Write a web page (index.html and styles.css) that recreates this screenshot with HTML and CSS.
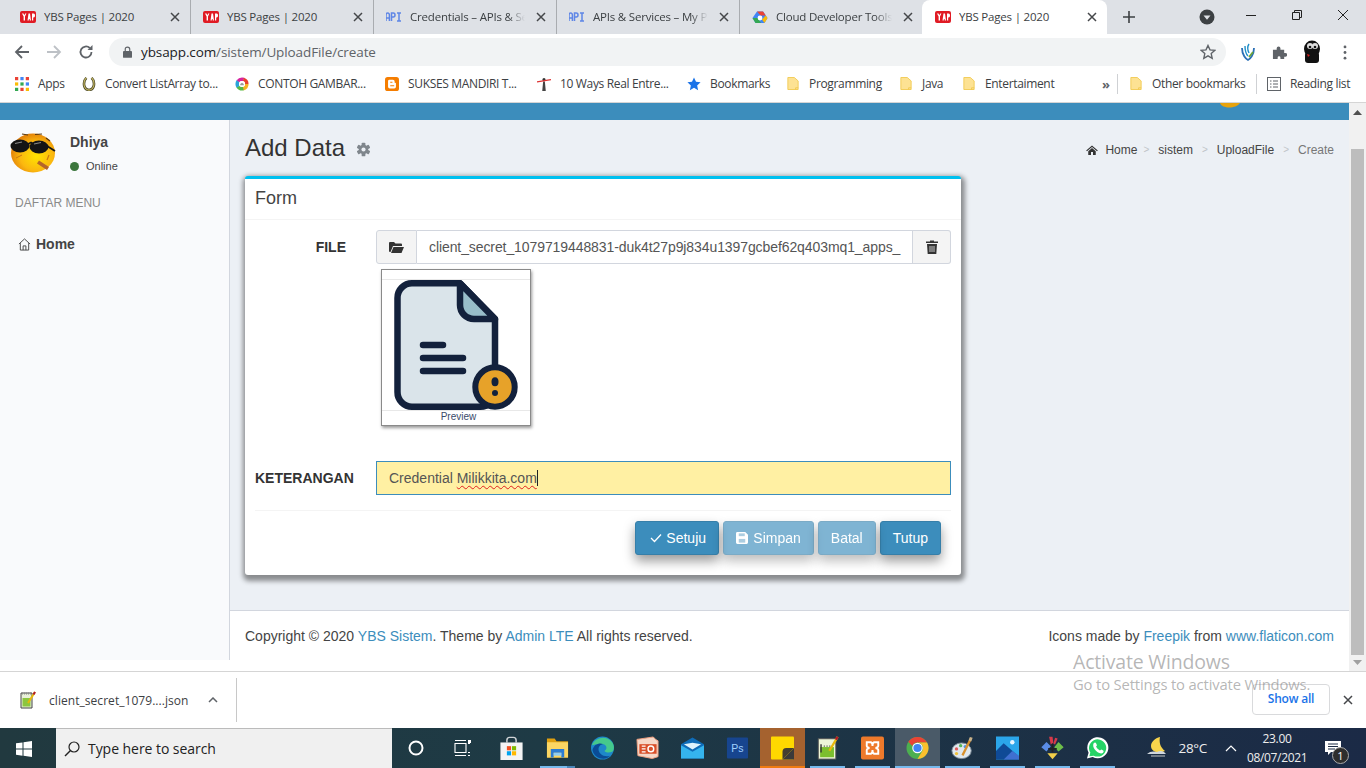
FILE: index.html
```html
<!DOCTYPE html>
<html lang="en">
<head>
<meta charset="utf-8">
<title>YBS Pages | 2020</title>
<link rel="stylesheet" href="styles.css">
</head>
<body>
<svg class="defs" width="0" height="0" aria-hidden="true">
  <symbol id="yap" viewBox="0 0 16 16"><rect x="0" y="2" width="16" height="12" rx="2" fill="#e01b24"/><path d="M2 4.500l1.600 3v4h1.400v-4l1.400-3H5.200L4.300 6.300 3.500 4.500zM7.500 11.500l1-7h1.500l1 7H9.800l-.2-1.500H8.900l-.2 1.500zM12 4.500h1.500c1.300 0 1.500 1 1.500 2s-.4 2-1.500 2h-.3v3H12z" fill="#fff"/></symbol>
  <symbol id="api" viewBox="0 0 16 16"><path d="M0 12V6c0-1 .6-2 1.700-2S3.400 5 3.400 6v6M0 9h3.400M5.500 12V4h1.800c1.100 0 1.700.8 1.700 2s-.6 2-1.700 2H5.500M11 4h4M13 4v8M11 12h4" fill="none" stroke="#5f86e6" stroke-width="1.500"/></symbol>
  <symbol id="x" viewBox="0 0 10 10"><path d="M1 1l8 8M9 1l-8 8" fill="none" stroke="#45474a" stroke-width="1.500"/></symbol>
  <symbol id="folder" viewBox="0 0 14 16"><path d="M1 1h7.500L13 5v10H1z" fill="#fde293" stroke="#f1c84b" stroke-width="1"/><path d="M10 15v-2h3" fill="none" stroke="#f1c84b"/></symbol>
</svg>

<header class="tabstrip">
  <div class="tab"><svg class="fav"><use href="#yap"/></svg><span class="tab-title">YBS Pages | 2020</span><svg class="tab-x"><use href="#x"/></svg></div>
  <div class="tab"><svg class="fav"><use href="#yap"/></svg><span class="tab-title">YBS Pages | 2020</span><svg class="tab-x"><use href="#x"/></svg></div>
  <div class="tab"><svg class="fav"><use href="#api"/></svg><span class="tab-title tab-fade">Credentials – APIs &amp; Services</span><svg class="tab-x"><use href="#x"/></svg></div>
  <div class="tab"><svg class="fav"><use href="#api"/></svg><span class="tab-title tab-fade">APIs &amp; Services – My Project</span><svg class="tab-x"><use href="#x"/></svg></div>
  <div class="tab tab-last"><svg class="fav" viewBox="0 0 16 16"><path d="M5 2.500h6l4.500 6.500-3 5H3.500l-3-5z" fill="#4285f4"/><path d="M5 2.500h6l2.800 4H8.500z" fill="#ea4335"/><path d="M.5 9l3 5h5.500l-3-5z" fill="#34a853"/><path d="M12.500 14l3-5-1.700-2.500-3.800 4z" fill="#fbbc05"/><circle cx="8" cy="9" r="2.400" fill="#fff"/></svg><span class="tab-title tab-fade">Cloud Developer Tools</span><svg class="tab-x"><use href="#x"/></svg></div>
  <div class="tab tab-active"><svg class="fav"><use href="#yap"/></svg><span class="tab-title">YBS Pages | 2020</span><svg class="tab-x"><use href="#x"/></svg></div>
  <svg class="newtab" viewBox="0 0 12 12"><path d="M6 0v12M0 6h12" stroke="#3c4043" stroke-width="1.600"/></svg>
  <div class="tabstrip-right">
    <svg class="tabsearch" viewBox="0 0 16 16"><circle cx="8" cy="8" r="7.500" fill="#3c4043"/><path d="M4.500 6.500h7L8 10.800z" fill="#dee1e6"/></svg>
    <div class="winctl">
      <svg viewBox="0 0 10 10"><path d="M0 5.500h10" stroke="#222"/></svg>
      <svg viewBox="0 0 10 10"><path d="M.5 2.500h7v7h-7zM2.500 2.500v-2h7v7h-2" fill="none" stroke="#222"/></svg>
      <svg viewBox="0 0 10 10"><path d="M0 0l10 10M10 0L0 10" stroke="#222"/></svg>
    </div>
  </div>
</header>

<nav class="toolbar">
  <svg class="nav-btn" viewBox="0 0 16 16"><path d="M15 8H2M8 2L2 8l6 6" fill="none" stroke="#5f6368" stroke-width="1.800"/></svg>
  <svg class="nav-btn" viewBox="0 0 16 16"><path d="M1 8h13M8 2l6 6-6 6" fill="none" stroke="#bdc1c6" stroke-width="1.800"/></svg>
  <svg class="nav-btn" viewBox="0 0 16 16"><path d="M13.500 8a5.500 5.500 0 1 1-1.700-4" fill="none" stroke="#5f6368" stroke-width="1.800"/><path d="M14.500 1v5h-5z" fill="#5f6368"/></svg>
  <div class="omnibox">
    <svg class="lock" viewBox="0 0 10 13"><path d="M2.500 6V3.500a2.500 2.500 0 0 1 5 0V6" fill="none" stroke="#5f6368" stroke-width="1.300"/><rect y="5.500" width="10" height="7.500" rx="1" fill="#5f6368"/></svg>
    <span class="url"><span class="url-host">ybsapp.com</span>/sistem/UploadFile/create</span>
    <svg class="star" viewBox="0 0 16 16"><path d="M8 1.500l2 4.400 4.700.5-3.500 3.200 1 4.700L8 11.900l-4.200 2.400 1-4.700L1.300 6.400 6 5.900z" fill="none" stroke="#5f6368" stroke-width="1.400"/></svg>
  </div>
  <svg class="ext-y" viewBox="0 0 16 18"><path d="M2 5c0 7 4 11 6 12 2-1 6-5 6-12" fill="none" stroke="#2a6fb5" stroke-width="1.800"/><path d="M5 3c0 6 2 9 3 10M9 1C7 4 8 8 9 10" fill="none" stroke="#1f8fc9" stroke-width="1.400"/><path d="M9 14l4-5" stroke="#6ba539" stroke-width="1.800"/></svg>
  <svg class="ext-p" viewBox="0 0 16 16"><path d="M1 5h4V3.500a2 2 0 0 1 4 0V5h4v3.500h1.200a2 2 0 0 1 0 4H13V15H9v-1.500a1.500 1.500 0 0 0-3 0V15H1z" fill="#5f6368"/></svg>
  <svg class="avatar" viewBox="0 0 20 24"><ellipse cx="10" cy="9" rx="8" ry="8.500" fill="#111"/><rect x="3" y="12" width="14" height="11" rx="3" fill="#111"/><circle cx="8" cy="6" r="3" fill="#ddd"/><circle cx="13" cy="6" r="3" fill="#ddd"/><circle cx="8" cy="7" r="1.300" fill="#111"/><circle cx="13" cy="7" r="1.300" fill="#111"/><path d="M5 14l3 1-2 2z" fill="#d42020"/></svg>
  <svg class="kebab" viewBox="0 0 4 16"><circle cx="2" cy="2" r="1.500" fill="#5f6368"/><circle cx="2" cy="8" r="1.500" fill="#5f6368"/><circle cx="2" cy="14" r="1.500" fill="#5f6368"/></svg>
</nav>

<nav class="bookmarks">
  <div class="bm"><svg class="bm-i" viewBox="0 0 13 13"><g><rect width="3" height="3" fill="#ea4335"/><rect x="5" width="3" height="3" fill="#4285f4"/><rect x="10" width="3" height="3" fill="#ea4335"/><rect y="5" width="3" height="3" fill="#fbbc05"/><rect x="5" y="5" width="3" height="3" fill="#34a853"/><rect x="10" y="5" width="3" height="3" fill="#4285f4"/><rect y="10" width="3" height="3" fill="#34a853"/><rect x="5" y="10" width="3" height="3" fill="#ea4335"/><rect x="10" y="10" width="3" height="3" fill="#fbbc05"/></g></svg><span>Apps</span></div>
  <div class="bm"><svg class="bm-i" viewBox="0 0 14 16"><path d="M4 1C0 5 0 14 7 15 14 14 14 5 10 1" fill="none" stroke="#4d4a2c" stroke-width="3"/><path d="M4 1C0 5 0 14 7 15 14 14 14 5 10 1" fill="none" stroke="#c9bc62" stroke-width="1.200"/></svg><span>Convert ListArray to...</span></div>
  <div class="bm"><svg class="bm-i" viewBox="0 0 16 16"><g fill="none" stroke-width="4"><circle cx="8" cy="8" r="5.500" stroke="#f5b324" pathLength="100" stroke-dasharray="21 79"/><circle cx="8" cy="8" r="5.500" stroke="#58b947" pathLength="100" stroke-dasharray="21 79" stroke-dashoffset="-20"/><circle cx="8" cy="8" r="5.500" stroke="#2ba4d9" pathLength="100" stroke-dasharray="21 79" stroke-dashoffset="-40"/><circle cx="8" cy="8" r="5.500" stroke="#d6249f" pathLength="100" stroke-dasharray="21 79" stroke-dashoffset="-60"/><circle cx="8" cy="8" r="5.500" stroke="#e8402c" pathLength="100" stroke-dasharray="20 80" stroke-dashoffset="-80"/></g><circle cx="8" cy="8" r="3.500" fill="#fff"/><path d="M6 9.500V8l2-1.500L10 8v1.500z" fill="#999"/></svg><span>CONTOH GAMBAR...</span></div>
  <div class="bm"><svg class="bm-i" viewBox="0 0 16 16"><rect width="16" height="16" rx="3" fill="#f57d00"/><path d="M5 3h4a2 2 0 0 1 2 2v1.500h.5a1 1 0 0 1 1 1V11a2 2 0 0 1-2 2H5.500a2 2 0 0 1-2-2V4.500A1.500 1.500 0 0 1 5 3z" fill="#fff"/><path d="M6 6h2.500M6 10h4.500" stroke="#f57d00" stroke-width="1.300"/></svg><span>SUKSES MANDIRI T...</span></div>
  <div class="bm"><svg class="bm-i" viewBox="0 0 16 16"><path d="M7 5h2l1 11H6z" fill="#444"/><circle cx="8" cy="3" r="1.800" fill="#333"/><path d="M0 5.500L16 3" stroke="#d33" stroke-width="1.500"/></svg><span>10 Ways Real Entre...</span></div>
  <div class="bm"><svg class="bm-i" viewBox="0 0 16 16"><path d="M8 .5l2.300 5 5.200.6-3.900 3.500 1.100 5.400L8 12.300 3.300 15l1.100-5.400L.5 6.100l5.200-.6z" fill="#1a73e8"/></svg><span>Bookmarks</span></div>
  <div class="bm"><svg class="bm-f"><use href="#folder"/></svg><span>Programming</span></div>
  <div class="bm"><svg class="bm-f"><use href="#folder"/></svg><span>Java</span></div>
  <div class="bm"><svg class="bm-f"><use href="#folder"/></svg><span>Entertaiment</span></div>
  <div class="bm bm-more">»</div>
  <div class="bm-sep"></div>
  <div class="bm"><svg class="bm-f"><use href="#folder"/></svg><span>Other bookmarks</span></div>
  <div class="bm-sep"></div>
  <div class="bm"><svg class="bm-i" viewBox="0 0 14 14"><rect x=".5" y=".5" width="13" height="13" fill="none" stroke="#5f6368"/><path d="M3 4h1.500M6 4h5M3 7h1.500M6 7h5M3 10h1.500M6 10h5" stroke="#5f6368"/></svg><span>Reading list</span></div>
</nav>

<main class="page">
  <div class="viewport">
    <div class="topbar"><svg class="topbar-peek" viewBox="0 0 20 6"><path d="M0 0c2 6 16 6 20 0z" fill="#e8a30c"/></svg></div>
    <div class="app">
      <aside class="sidebar">
        <div class="user">
          <svg class="user-pic" viewBox="0 0 46 42">
            <defs><radialGradient id="face" cx=".58" cy=".58" r=".62"><stop offset="0" stop-color="#ffe400"/><stop offset=".6" stop-color="#fbb80f"/><stop offset="1" stop-color="#e07a08"/></radialGradient></defs>
            <ellipse cx="23" cy="21" rx="22" ry="19.500" fill="url(#face)"/>
            <path d="M12 2l6 1M25 2.500l7-.5M36 6l4 3" fill="none" stroke="#5a3a10" stroke-width="1.200"/>
            <ellipse cx="10" cy="14" rx="9.500" ry="6.500" fill="#151515"/>
            <ellipse cx="29" cy="15" rx="9.500" ry="6.500" fill="#151515"/>
            <path d="M18 12l3-1.500 2 1.500M37 14l8 5" fill="none" stroke="#151515" stroke-width="1.800"/>
            <path d="M5 11.500l7-1.500M24 12l7-1.500" stroke="#8a8a8a" stroke-width="1.200"/>
            <path d="M6 26l6-3" stroke="#c97a10" stroke-width="1"/>
            <path d="M27 31.500l10 6.500 2-3-10-6.500z" fill="#b5652a"/>
            <path d="M37 28l2-5" stroke="#c97a10" stroke-width="1.200"/>
          </svg>
          <div class="user-info">
            <div class="user-name">Dhiya</div>
            <div class="user-status"><span class="dot"></span>Online</div>
          </div>
        </div>
        <div class="menu-head">DAFTAR MENU</div>
        <div class="menu-item">
          <svg class="home-i" viewBox="0 0 14 14"><path d="M1 6.500L7 1l6 5.500M2.500 5.500V13h9V5.500M5.500 13V8.500h3V13" fill="none" stroke="#444" stroke-width="1"/></svg>
          <span>Home</span>
        </div>
      </aside>
      <div class="main">
        <section class="content">
          <div class="content-head">
            <h1>Add Data</h1>
            <svg class="gear" viewBox="0 0 16 16"><g fill="#7f868c"><circle cx="8" cy="8" r="5"/><rect x="6" y=".7" width="4" height="14.600" rx="1"/><rect x="6" y=".7" width="4" height="14.600" rx="1" transform="rotate(60 8 8)"/><rect x="6" y=".7" width="4" height="14.600" rx="1" transform="rotate(120 8 8)"/></g><circle cx="8" cy="8" r="2.200" fill="#ecf0f5"/></svg>
            <ol class="crumbs">
              <li class="crumb"><svg class="crumb-home" viewBox="0 0 14 12"><path d="M0 6.500L7 .5l7 6-1 1-6-5-6 5zM2.500 7.500L7 3.700l4.500 3.800V12H8.200V8.500H5.800V12H2.500z" fill="#333"/></svg>Home</li>
              <li class="crumb-sep">&gt;</li>
              <li class="crumb">sistem</li>
              <li class="crumb-sep">&gt;</li>
              <li class="crumb">UploadFile</li>
              <li class="crumb-sep">&gt;</li>
              <li class="crumb crumb-now">Create</li>
            </ol>
          </div>
          <div class="card">
            <div class="card-head">Form</div>
            <div class="card-body">
              <div class="field">
                <label class="label label-file">FILE</label>
                <div class="field-col">
                  <div class="group">
                    <span class="addon addon-l"><svg class="addon-i" viewBox="0 0 15 12"><path d="M0 2a1 1 0 0 1 1-1h4l1.500 1.500H12a1 1 0 0 1 1 1V5H4L1.500 11H1a1 1 0 0 1-1-1z" fill="#333"/><path d="M4.500 6H15l-2.500 6H2z" fill="#333"/></svg></span>
                    <span class="file-name">client_secret_1079719448831-duk4t27p9j834u1397gcbef62q403mq1_apps_</span>
                    <span class="addon addon-r"><svg class="trash" viewBox="0 0 12 14"><path d="M4 1.500V.5h4v1h4V3H0V1.500zM1 4h10l-.7 10H1.700z" fill="#333"/><path d="M4 6v6M6 6v6M8 6v6" stroke="#eee" stroke-width=".8"/></svg></span>
                  </div>
                  <div class="preview">
                    <div class="preview-img">
                      <svg class="doc" viewBox="0 4 130 130">
                        <path d="M7.500 22A14.500 14.500 0 0 1 22 7.300h48L105 43v73a14.700 14.700 0 0 1-14.700 14.700H22A14.500 14.500 0 0 1 7.500 116z" fill="#dae4ea" stroke="#13213c" stroke-width="6.500" stroke-linejoin="round"/>
                        <path d="M70 7.300V29a14 14 0 0 0 14 14h21z" fill="#98bdc9" stroke="#13213c" stroke-width="6.500" stroke-linejoin="round"/>
                        <path d="M33 69h20M33 82h40M33 95h40" stroke="#13213c" stroke-width="6.500" stroke-linecap="round"/>
                        <circle cx="105" cy="111" r="19.700" fill="#e7a229" stroke="#13213c" stroke-width="6"/>
                        <ellipse cx="105" cy="105.700" rx="3.500" ry="4.500" fill="#13213c"/>
                        <circle cx="105" cy="117" r="3" fill="#13213c"/>
                      </svg>
                    </div>
                    <div class="preview-cap">Preview</div>
                  </div>
                </div>
              </div>
              <div class="field field-note">
                <label class="label">KETERANGAN</label>
                <div class="note-input">Credential <span class="misspelt">Milikkita.com</span><span class="caret"></span></div>
              </div>
            </div>
            <div class="card-foot">
              <button class="btn btn-ok"><svg class="btn-i" viewBox="0 0 12 10"><path d="M1 5l3.500 3.500L11 1.500" fill="none" stroke="#fff" stroke-width="1.300"/></svg>Setuju</button>
              <button class="btn btn-off"><svg class="btn-i" viewBox="0 0 13 13"><path d="M0 1.500A1.500 1.500 0 0 1 1.500 0H10l3 3v8.500a1.500 1.500 0 0 1-1.500 1.500h-10A1.500 1.500 0 0 1 0 11.500z" fill="#fff"/><rect x="3" y="1.500" width="6.500" height="3" fill="#80b3d1"/><rect x="3" y="7.500" width="7" height="4" fill="#80b3d1"/></svg>Simpan</button>
              <button class="btn btn-off">Batal</button>
              <button class="btn">Tutup</button>
            </div>
          </div>
        </section>
        <footer class="footer">
          <span>Copyright © 2020 <a class="lnk">YBS Sistem</a>. Theme by <a class="lnk">Admin LTE</a> All rights reserved.</span>
          <span>Icons made by <a class="lnk">Freepik</a> from <a class="lnk">www.flaticon.com</a></span>
        </footer>
      </div>
    </div>
    <div class="strip"></div>
  </div>
  <div class="scrollbar">
    <svg class="sb-arrow" viewBox="0 0 9 5"><path d="M4.500 0L9 5H0z" fill="#505050"/></svg>
    <div class="sb-thumb"></div>
    <svg class="sb-arrow" viewBox="0 0 9 5"><path d="M4.500 5L9 0H0z" fill="#a0a0a0"/></svg>
  </div>
</main>

<section class="downloads">
  <div class="dl-item">
    <svg class="dl-i" viewBox="0 0 16 18"><path d="M1 2h11v15H1z" fill="#e8f0d8" stroke="#444"/><rect x="2.500" y="7" width="8" height="8.500" fill="#8cc63f"/><path d="M2 2.500h9" stroke="#888" stroke-dasharray="1 1" stroke-width="2"/><path d="M15 1L8 12" stroke="#e8b90c" stroke-width="2"/><path d="M15 1l-1.500 2.500" stroke="#b2182b" stroke-width="2"/></svg>
    <span class="dl-name">client_secret_1079....json</span>
    <svg class="dl-caret" viewBox="0 0 10 6"><path d="M1 5l4-4 4 4" fill="none" stroke="#5f6368" stroke-width="1.500"/></svg>
  </div>
  <div class="dl-right">
    <div class="showall">Show all</div>
    <svg class="dl-x"><use href="#x"/></svg>
  </div>
</section>

<footer class="taskbar">
  <svg class="win" viewBox="0 0 16 16"><path d="M0 2.300l6.500-.9v6.200H0zM7.500 1.300L16 0v7.600H7.500zM0 8.500h6.500v6.200L0 13.800zM7.500 8.500H16V16l-8.500-1.200z" fill="#fff"/></svg>
  <div class="search">
    <svg class="search-i" viewBox="0 0 16 16"><circle cx="10" cy="6" r="5" fill="none" stroke="#222" stroke-width="1.200"/><path d="M6.500 9.500L1 15" stroke="#222" stroke-width="1.400"/></svg>
    <span>Type here to search</span>
  </div>
  <div class="apps">
    <div class="app-slot"><svg class="ti" viewBox="0 0 18 18"><circle cx="9" cy="9" r="6.500" fill="none" stroke="#fff" stroke-width="2"/></svg></div>
    <div class="app-slot slot-tv"><svg class="ti" viewBox="0 0 18 18"><path d="M1 1.500h11M1 4.500h11v9H1zM1 16.500h11M14 4.500h2M14 13.500h2M14 16.500h2" fill="none" stroke="#fff" stroke-width="1.100"/><rect x="14" y="1" width="3" height="3" fill="#fff"/></svg></div>
    <div class="app-slot slot-store"><svg class="ti-l" viewBox="0 0 24 26"><path d="M7 7V4.500a3 3 0 0 1 3-3h4a3 3 0 0 1 3 3V7" fill="none" stroke="#cfd3d6" stroke-width="1.600"/><rect y="7" width="24" height="19" fill="#f4f4f4"/><rect x="7" y="11" width="4.500" height="4.500" fill="#f25022"/><rect x="12.500" y="11" width="4.500" height="4.500" fill="#7fba00"/><rect x="7" y="16.500" width="4.500" height="4.500" fill="#00a4ef"/><rect x="12.500" y="16.500" width="4.500" height="4.500" fill="#ffb900"/></svg></div>
    <div class="app-slot slot-open slot-explorer"><svg class="ti-l" viewBox="0 0 24 24"><path d="M1 2h8l2 3h12v17H1z" fill="#e0a010"/><rect x="1" y="6" width="22" height="16" fill="#fcd663"/><path d="M5 22v-9h14v9h-3v-5H8v5z" fill="#2b7cd3"/><rect x="8" y="17" width="8" height="3" fill="#8fcdf5"/></svg></div>
    <div class="app-slot"><svg class="ti-l" viewBox="0 0 24 24"><circle cx="12" cy="12" r="12" fill="#1e88c9"/><path d="M1 9C4 1 16-2 22 6c3 4 2 9 0 10-3 1-6 1-8-1 3-1 3-6-1-7C7 7 3 9 1 9z" fill="#45c98c"/><path d="M1.500 14C3 8 9 6 13 8c-5 0-7 6-3 10 3 3 7 3 10 2-5 6-17 3-18.500-6z" fill="#0a4c96"/></svg></div>
    <div class="app-slot"><svg class="ti-l" viewBox="0 0 24 24"><path d="M1 3l17-2.500 3 3 2 1V21l-6 2L2 20z" fill="#f6d8c8" stroke="#f0a080"/><rect x="3.500" y="8" width="18" height="10" fill="#d9502a"/><path d="M6 10h4M6 13h4M6 16h4" stroke="#fff" stroke-width="1.300"/><circle cx="15.500" cy="13" r="3" fill="none" stroke="#fff" stroke-width="1.500"/></svg></div>
    <div class="app-slot"><svg class="ti-l" viewBox="0 0 24 24"><path d="M0 8l12-7 12 7v15H0z" fill="#0f6cb8"/><path d="M0 9l12 7 12-7v14H0z" fill="#35b4ee"/><path d="M3 8l9-1.500L21 8l-9 5.500z" fill="#dff3fd"/></svg></div>
    <div class="app-slot"><svg class="ti-l" viewBox="0 0 24 24"><rect x="1" y="1" width="22" height="22" rx="1" fill="#17458f"/><text x="12" y="16.500" class="ps-t">Ps</text></svg></div>
    <div class="app-slot slot-sticky"><svg class="ti-l" viewBox="0 0 24 24"><rect width="24" height="24" rx="1" fill="#ffd800"/><path d="M24 12v12H12z" fill="#3a3a3a"/><path d="M24 12L12 24v-8a4 4 0 0 1 4-4z" fill="#443f30"/></svg></div>
    <div class="app-slot slot-open"><svg class="ti-l" viewBox="0 0 24 26"><rect x="2" y="3" width="19" height="22" fill="#eef6d8" stroke="#555"/><rect x="4" y="12" width="15" height="11" fill="#7cbf2e"/><path d="M5 9v9M8 11h1M11 11h1M14 11h1" stroke="#333" stroke-width="1.500" fill="none"/><path d="M23 1l-9 15" stroke="#e8b90c" stroke-width="2.500"/><path d="M23 1l-2 3" stroke="#b2182b" stroke-width="2.500"/></svg></div>
    <div class="app-slot slot-open"><svg class="ti-l" viewBox="0 0 24 24"><rect width="24" height="24" rx="2" fill="#ee7a2b"/><path d="M6 6h4c2 0 2 3 2 4 0-1 0-4 2-4h4v4c0 1-2 2-3 2 1 0 3 1 3 2v4h-4c-2 0-2-3-2-4 0 1 0 4-2 4H6v-4c0-1 2-2 3-2-1 0-3-1-3-2z" fill="none" stroke="#fff" stroke-width="2"/></svg></div>
    <div class="app-slot slot-active"><svg class="ti-l" viewBox="0 0 24 24"><circle cx="12" cy="12" r="11.500" fill="#4caf50"/><path d="M12 .5A11.500 11.500 0 0 1 22 6.300H12A5.800 5.800 0 0 0 6.500 10L2.400 5.500A11.500 11.500 0 0 1 12 .5z" fill="#ea4335"/><path d="M22 6.300A11.500 11.500 0 0 1 12 23.500l5-8.500A5.800 5.800 0 0 0 12 6.300z" fill="#fbc02d"/><circle cx="12" cy="12" r="5.500" fill="#fff"/><circle cx="12" cy="12" r="4.300" fill="#4285f4"/></svg></div>
    <div class="app-slot slot-open"><svg class="ti-l" viewBox="0 0 24 26"><ellipse cx="11" cy="16" rx="10.500" ry="8.500" fill="#dfe8ef" stroke="#7c8a96"/><circle cx="5.500" cy="14" r="1.800" fill="#e15b5b"/><circle cx="10" cy="10.500" r="1.800" fill="#56b556"/><circle cx="15" cy="11.500" r="1.800" fill="#4f8fe0"/><circle cx="5.500" cy="19" r="1.800" fill="#f0c23c"/><path d="M21 3L12 21" stroke="#d8902c" stroke-width="2.500"/><path d="M20 1l3 1-1.500 4-3-1z" fill="#c9b28a"/></svg></div>
    <div class="app-slot slot-open"><svg class="ti-l" viewBox="0 0 24 24"><rect width="24" height="24" fill="#2ba6ea"/><path d="M0 24V15l8-8 16 14v3z" fill="#0f4a96"/><path d="M8 24l9-9 7 5v4z" fill="#3f6fd0"/><circle cx="17" cy="6" r="2.300" fill="#e8f6ff"/></svg></div>
    <div class="app-slot slot-open"><svg class="ti-l" viewBox="0 0 26 28"><path d="M0 13l6-6 5 5-5 6z" fill="#5a8de6"/><path d="M20 7l6 6-6 5-5-5z" fill="#6ebe4a"/><path d="M7 20h12l-6 7z" fill="#f2cf4a"/><path d="M9 1l4 0 1 7-3 2z" fill="#d83a4a"/><path d="M16 2l3 1-3 7-2-1z" fill="#d83a4a"/><path d="M13 9v10M8 15h10" stroke="#222" stroke-width="2"/></svg></div>
    <div class="app-slot slot-open"><svg class="ti-l" viewBox="0 0 24 24"><path d="M1 23l1.700-6A11 11 0 1 1 7 21.300z" fill="#fff"/><path d="M3.500 20.500l1-3.700A9 9 0 1 1 8 20z" fill="#25d366"/><path d="M8 7c1-1 2-1 2.500 0l1 2-1 1.500c1 2 2 3 4 4l1.500-1 2 1c1 1 0 2.500-1 3-3 1-10-4-9.500-9z" fill="#fff"/></svg></div>
  </div>
  <div class="tray">
    <svg class="moon" viewBox="0 0 26 24"><path d="M15 1c-1 5 0 10 5 14-6 3-14 1-14-5 0-4 4-8 9-9z" fill="#f8d44c"/><path d="M2 18c3-3 7-3 10-2 3-2 7-1 9 2z" fill="#cfd6dd"/><path d="M6 20h14" stroke="#8b949c" stroke-width="1.500"/></svg>
    <span class="temp">28°C</span>
    <svg class="tray-up" viewBox="0 0 12 7"><path d="M1 6l5-5 5 5" fill="none" stroke="#fff" stroke-width="1.200"/></svg>
    <div class="clock"><div>23.00</div><div>08/07/2021</div></div>
    <div class="notif">
      <svg class="notif-i" viewBox="0 0 16 15"><path d="M0 0h16v11H6l-3 3v-3H0z" fill="#fff"/><path d="M3 3h10M3 5.500h10M3 8h7" stroke="#1b2a44" stroke-width="1"/></svg>
      <span class="badge">1</span>
    </div>
  </div>
</footer>

<div class="activate">
  <div class="activate-t">Activate Windows</div>
  <div class="activate-s">Go to Settings to activate Windows.</div>
</div>
</body>
</html>
```

FILE: styles.css
```css
* { box-sizing: border-box; }
html, body { margin: 0; padding: 0; height: 768px; overflow: hidden; background: #fff; }
body { position: relative; font-family: "Liberation Sans", Arial, sans-serif; color: #333; font-size: 14px; display: flex; flex-direction: column; }
.defs { position: absolute; }
svg { display: block; flex: none; }

/* Chrome tab strip */
.tabstrip { height: 34px; background: #dee1e6; display: flex; align-items: center; padding-left: 8px; font-family: "Open Sans", sans-serif; font-size: 11.5px; color: #3c4043; letter-spacing: -.2px; flex: none; }
.tab { width: 183px; height: 34px; display: flex; align-items: center; padding: 0 7px 0 12px; gap: 8px; border-right: 1px solid #a9acb0; background-clip: padding-box; }
.tab-last { border-right: 0; }
.tab-active { background: #fff; border: 0; border-radius: 8px 8px 0 0; margin-left: -1px; width: 185px; padding-left: 13px; }
.fav { width: 16px; height: 16px; }
.tab-title { flex: 1; white-space: nowrap; overflow: hidden; padding-bottom: 1px; }
.tab-fade { -webkit-mask-image: linear-gradient(90deg, #000 85%, transparent 100%); mask-image: linear-gradient(90deg, #000 85%, transparent 100%); }
.tab-x { width: 10px; height: 10px; margin: 0 3px; }
.newtab { width: 12px; height: 12px; margin-left: 16px; }
.tabstrip-right { margin-left: auto; display: flex; align-items: flex-start; height: 34px; }
.tabsearch { width: 16px; height: 16px; margin: 9px 31px 0 0; }
.winctl { display: flex; gap: 36px; padding: 10px 18px 0 0; }
.winctl svg { width: 10px; height: 10px; }

/* Toolbar */
.toolbar { height: 33px; background: #fff; display: flex; align-items: center; padding: 3px 0 0 14px; flex: none; }
.nav-btn { width: 16px; height: 16px; margin-right: 16px; }
.omnibox { width: 1117px; height: 28px; margin-left: -1px; border-radius: 14px; background: #f1f3f4; display: flex; align-items: center; padding: 0 10px 0 14px; font-family: "Open Sans", sans-serif; font-size: 13.5px; color: #5f6368; letter-spacing: -.1px; }
.lock { width: 9px; height: 12px; margin-right: 9px; }
.url { flex: 1; }
.url-host { color: #202124; }
.star { width: 16px; height: 16px; }
.ext-y { width: 16px; height: 18px; margin-left: 14px; }
.ext-p { width: 15px; height: 15px; margin-left: 16px; }
.avatar { width: 20px; height: 24px; margin-left: 15px; }
.kebab { width: 4px; height: 15px; margin-left: 21px; }

/* Bookmarks bar */
.bookmarks { height: 36px; background: #fff; border-bottom: 1px solid #d5d5d5; display: grid; grid-template-columns: 67px 153px 150px 152px 150px 100px 113px 63px 139px 15px 13px 126px 11px 1fr; padding: 0 0 2px 15px; align-items: center; font-family: "Open Sans", sans-serif; font-size: 12px; letter-spacing: -.34px; color: #3c4043; flex: none; white-space: nowrap; }
.bm { display: flex; align-items: center; gap: 9px; }
.bm-i { width: 14px; height: 14px; }
.bm-f { width: 12px; height: 15px; margin-right: 1px; }
.bm-more { font-size: 13px; font-weight: 700; color: #5f6368; }
.bm-sep { width: 1px; height: 20px; background: #cfd1d4; }

/* Page */
.page { height: 568px; display: flex; flex: none; background: #fff; }
.viewport { flex: 1; display: flex; flex-direction: column; min-width: 0; }
.topbar { height: 17px; background: #3c8dbc; flex: none; position: relative; }
.topbar-peek { position: absolute; left: 1220px; top: 0; width: 20px; height: 6px; }
.app { display: grid; grid-template-columns: 230px 1fr; height: 540px; flex: none; }
.strip { flex: 1; background: #fff; }

.sidebar { background: #f9fafc; border-right: 1px solid #d2d6de; padding: 12px 0 0 10px; }
.user { display: flex; gap: 14px; }
.user-pic { width: 46px; height: 42px; }
.user-info { padding-top: 2px; }
.user-name { font-weight: 700; font-size: 14px; line-height: 16px; color: #444; }
.user-status { display: flex; align-items: center; gap: 7px; font-size: 11px; margin-top: 9px; line-height: 14px; color: #444; }
.dot { width: 9px; height: 9px; border-radius: 50%; background: #3c763d; }
.menu-head { margin: 21px 0 0 5px; font-size: 12px; line-height: 16px; color: #8a8a8a; }
.menu-item { margin: 24px 0 0 8px; display: flex; align-items: center; gap: 5px; font-weight: 700; font-size: 14px; line-height: 18px; color: #444; }
.home-i { width: 13px; height: 13px; }

.main { display: flex; flex-direction: column; background: #ecf0f5; min-width: 0; }
.content { flex: 1; padding: 0 15px; }
.content-head { height: 56px; display: flex; align-items: center; }
h1 { margin: 0; font-size: 24px; font-weight: 400; color: #333; line-height: 56px; }
.gear { width: 15px; height: 15px; margin: 3px 0 0 11px; }
.crumbs { list-style: none; margin: 3px 0 0 auto; padding: 0; display: flex; align-items: center; font-size: 12px; gap: 9px; color: #444; }
.crumb { display: flex; align-items: center; gap: 7px; }
.crumb:first-child { margin-right: -3px; }
.crumb-home { width: 12px; height: 10px; }
.crumb-sep { color: #c0c4c8; font-size: 10px; }
.crumb-now { color: #777; }

.card { width: 716px; height: 399px; background: #fff; border-top: 3px solid #00c0ef; border-radius: 3px; box-shadow: 1px 3px 5px 3px rgba(0,0,0,.42); }
.card-head { height: 41px; padding: 0 10px; border-bottom: 1px solid #f4f4f4; font-size: 18px; line-height: 38px; color: #444; }
.card-body { padding: 10px 10px 0; height: 290px; }
.field { display: flex; }
.label { width: 121px; font-weight: 700; font-size: 14px; color: #333; line-height: 34px; flex: none; }
.label-file { text-align: right; padding-right: 30px; }
.field-col { flex: 1; min-width: 0; }
.group { display: flex; height: 34px; }
.addon { background: #f4f4f4; border: 1px solid #d2d6de; display: flex; align-items: center; justify-content: center; flex: none; }
.addon-l { width: 41px; border-radius: 3px 0 0 3px; }
.addon-r { width: 38px; border-left: 0; border-radius: 0 3px 3px 0; }
.addon-i { width: 15px; height: 12px; }
.trash { width: 12px; height: 14px; }
.file-name { flex: 1; min-width: 0; border: 1px solid #d2d6de; border-left: 0; padding: 0 12px; line-height: 32px; overflow: hidden; white-space: nowrap; color: #555; letter-spacing: -.09px; }
.preview { width: 150px; height: 157px; margin: 5px 0 0 5px; border: 1px solid #8a8a8a; box-shadow: 1px 2px 3px rgba(0,0,0,.4); background: #fff; display: flex; flex-direction: column; padding-top: 9px; }
.preview-img { height: 132px; border-top: 1px solid #e8e8e8; border-bottom: 1px solid #e8e8e8; }
.doc { width: 130px; height: 130px; margin-left: 8px; }
.preview-cap { font-size: 10px; text-align: center; line-height: 12px; color: #3a4a6a; padding-left: 5px; }
.field-note { margin-top: 35px; }
.note-input { flex: 1; height: 34px; background: #fff0a3; border: 1px solid #3c8dbc; padding: 0 12px; line-height: 32px; color: #555; display: flex; white-space: pre; }
.misspelt { text-decoration: underline wavy #e02020 1px; text-underline-offset: 2px; }
.caret { width: 1px; height: 16px; background: #222; align-self: center; }
.card-foot { margin: 0 10px; height: 65px; border-top: 1px solid #f4f4f4; display: flex; justify-content: flex-end; gap: 4px; padding: 10px 10px 0 0; }
.btn { height: 34px; border: 1px solid #367fa9; border-radius: 3px; background: #3c8dbc; color: #fff; font: 14px "Liberation Sans", Arial, sans-serif; padding: 0 12px; display: flex; align-items: center; gap: 5px; box-shadow: 0 6px 12px rgba(0,0,0,.4); }
.btn-ok { padding: 0 12px 0 14px; gap: 4px; width: 84px; }
.btn-off { opacity: .65; }
.btn-i { width: 12px; height: 12px; }

.footer { height: 50px; flex: none; background: #fff; border-top: 1px solid #d2d6de; padding: 0 15px; display: flex; justify-content: space-between; align-items: center; color: #444; font-size: 14px; }
.lnk { color: #3c8dbc; }

.scrollbar { width: 17px; background: #f1f1f1; display: flex; flex-direction: column; align-items: center; padding-top: 7px; flex: none; }
.sb-arrow { width: 9px; height: 5px; flex: none; }
.sb-thumb { width: 13px; height: 506px; margin: 34px 0 5px; background: #bdbdbd; }

/* Download shelf */
.downloads { height: 57px; flex: none; background: #fff; border-top: 1px solid #d5d5d5; display: flex; align-items: center; justify-content: space-between; font-family: "Open Sans", sans-serif; font-size: 12px; letter-spacing: .05px; color: #3c4043; }
.dl-item { height: 44px; width: 237px; display: flex; align-items: center; padding-left: 20px; border-right: 1px solid #c8c8c8; }
.dl-i { width: 16px; height: 18px; }
.dl-name { margin-left: 13px; white-space: nowrap; }
.dl-caret { width: 10px; height: 6px; margin-left: 19px; }
.dl-right { display: flex; align-items: center; padding-right: 13px; }
.showall { width: 78px; height: 31px; border: 1px solid #d9dadc; border-radius: 4px; color: #1a73e8; text-align: center; line-height: 27px; font-weight: 600; letter-spacing: -.2px; margin-top: -2px; }
.dl-x { width: 10px; height: 10px; margin-left: 13px; }

/* Taskbar */
.taskbar { height: 40px; flex: none; background: linear-gradient(90deg, #21393f 0%, #1e3a45 40%, #1b2a46 100%); display: flex; align-items: stretch; color: #fff; }
.win { width: 16px; height: 16px; margin: 13px 24px 0 16px; }
.search { width: 336px; background: #f0f0f0; border-top: 1px solid #bbb; display: flex; align-items: center; padding-left: 8px; gap: 8px; color: #222; font-family: "Open Sans", sans-serif; font-size: 14px; letter-spacing: -.05px; }
.search-i { width: 16px; height: 16px; }
.apps { display: flex; padding-left: 1px; }
.app-slot { width: 45px; display: flex; align-items: center; justify-content: center; position: relative; }
.slot-tv { width: 49px; }
.slot-store { width: 48px; }
.slot-open::after, .slot-active::after, .slot-sticky::after { content: ""; position: absolute; left: 5px; right: 5px; bottom: 0; height: 2px; background: #76b9ed; }
.slot-explorer::after { background: linear-gradient(90deg, #76b9ed 78%, #4a86b8 78%); }
.slot-active { background: #4a5a68; }
.slot-active::after { left: 0; right: 0; }
.slot-sticky { background: #a5622f; }
.slot-sticky::after { left: 0; right: 0; background: #f07a12; }
.ti { width: 18px; height: 18px; }
.ti-l { width: 23px; height: 24px; }
.ps-t { fill: #9fd0ff; font: 11px "Liberation Sans", sans-serif; text-anchor: middle; }
.tray { margin-left: auto; display: flex; align-items: center; font-family: "Open Sans", sans-serif; font-size: 12px; color: #eee; }
.moon { width: 26px; height: 24px; }
.temp { margin-left: 7px; font-size: 13.5px; letter-spacing: -.3px; }
.tray-up { width: 12px; height: 7px; margin-left: 18px; }
.clock { width: 60px; margin-left: 10px; text-align: center; line-height: 19px; font-size: 12px; letter-spacing: -.35px; }
.notif { width: 59px; height: 40px; position: relative; }
.notif-i { width: 16px; height: 15px; position: absolute; left: 18px; top: 13px; }
.badge { position: absolute; left: 25px; top: 19px; width: 17px; height: 17px; border-radius: 50%; background: #2e2e2e; border: 1px solid #aaa; color: #fff; font-size: 11px; line-height: 15px; text-align: center; }

/* Watermark over everything */
.activate { position: absolute; left: 1073px; top: 650px; font-family: "Open Sans", sans-serif; color: rgba(120,120,120,.55); white-space: nowrap; pointer-events: none; }
.activate-t { font-size: 19.5px; line-height: 24px; letter-spacing: -.2px; }
.activate-s { font-size: 14.8px; line-height: 20px; letter-spacing: -.15px; }
```
